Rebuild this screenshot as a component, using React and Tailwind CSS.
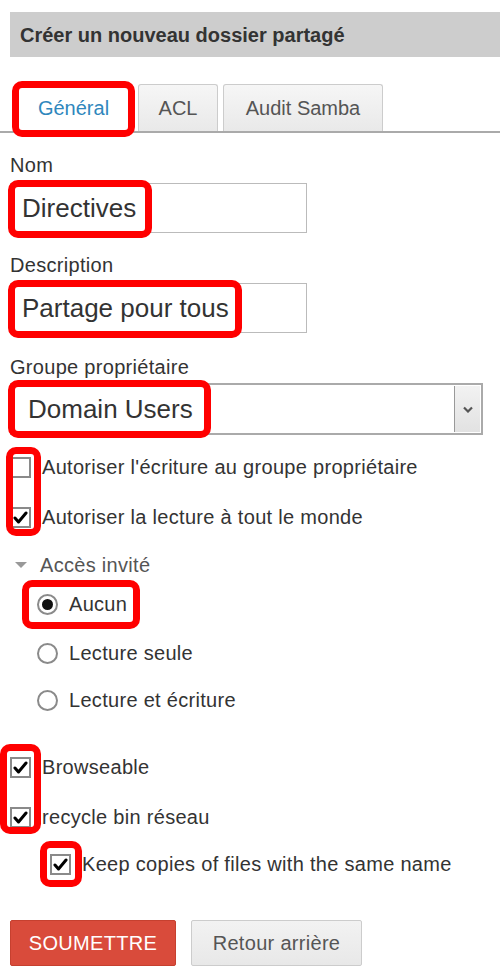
import React from 'react';

function Check({ checked }) {
	return (
		<span className="w-[21px] h-[21px] border-2 border-[#8a8a8a] bg-white flex items-center justify-center shrink-0">
			{checked && (
				<svg width="15" height="13" viewBox="0 0 15 13">
					<path d="M2 7 L5.5 11 L13 2" fill="none" stroke="#000" strokeWidth="3" strokeLinecap="round" strokeLinejoin="round" />
				</svg>
			)}
		</span>
	);
}

function Radio({ checked }) {
	return (
		<span className="w-[21px] h-[21px] rounded-full border-2 border-[#8a8a8a] bg-white flex items-center justify-center shrink-0">
			{checked && <span className="w-[11px] h-[11px] rounded-full bg-[#111]" />}
		</span>
	);
}

function Mark({ className }) {
	return <span className={`absolute border-[7px] border-[#ff0000] rounded-[10px] pointer-events-none ${className}`} />;
}

export default function App() {
	return (
		<div className="w-[500px] min-h-[980px] bg-white font-['Liberation_Sans',Arial,sans-serif] text-[20px] text-[#333] overflow-hidden">
			<div className="mt-[12px] ml-[10px] h-[45px] bg-[#cdcdcd] flex items-center pl-[10px] font-bold">
				Créer un nouveau dossier partagé
			</div>

			<div className="mt-[27px] h-[49px] flex items-end gap-[5px] pl-[14px] border-b-2 border-[#aaaaaa]">
				<div className="relative w-[119px] h-[47px] bg-white border border-[#ccc] border-b-0 rounded-t-[3px] flex items-center justify-center text-[#2f87bd]">
					Général
					<Mark className="left-[-3px] top-[-4px] w-[123px] h-[56px]" />
				</div>
				<div className="w-[80px] h-[47px] bg-gradient-to-b from-[#f6f6f6] to-[#e9e9e9] border border-[#ccc] border-b-0 rounded-t-[3px] flex items-center justify-center text-[#555]">
					ACL
				</div>
				<div className="w-[160px] h-[47px] bg-gradient-to-b from-[#f6f6f6] to-[#e9e9e9] border border-[#ccc] border-b-0 rounded-t-[3px] flex items-center justify-center text-[#555]">
					Audit Samba
				</div>
			</div>

			<div className="pl-[10px] tracking-[0.3px]">
				<div className="mt-[22px] leading-[20px]">Nom</div>
				<div className="relative mt-[8px] w-[297px] h-[50px] border border-[#bbb] flex items-center pl-[11px] text-[26px] tracking-normal">
					Directives
					<Mark className="left-[-3px] top-[-4px] w-[144px] h-[58px]" />
				</div>

				<div className="mt-[22px] leading-[20px]">Description</div>
				<div className="relative mt-[8px] w-[297px] h-[50px] border border-[#bbb] flex items-center pl-[11px] text-[26px] tracking-normal">
					Partage pour tous
					<Mark className="left-[-3px] top-[-4px] w-[234px] h-[58px]" />
				</div>

				<div className="mt-[24px] leading-[20px]">Groupe propriétaire</div>
				<div className="relative mt-[6px] w-[473px] h-[52px] border-2 border-[#aaa] flex items-stretch text-[26px] tracking-normal">
					<div className="flex-1 flex items-center pl-[16px]">Domain Users</div>
					<div className="w-[26px] my-[1px] mr-[1px] bg-gradient-to-b from-[#f2f2f2] to-[#e2e2e2] border-l border-[#999] flex items-center justify-center">
						<svg width="10" height="7" viewBox="0 0 10 7">
							<path d="M1 1.5 L5 5.5 L9 1.5" fill="none" stroke="#555" strokeWidth="2.2" />
						</svg>
					</div>
					<Mark className="left-[-4px] top-[-5px] w-[203px] h-[58px]" />
				</div>

				<div className="relative mt-[20px]">
					<div className="h-[24px] flex items-center gap-[11px]">
						<Check />
						<span>Autoriser l'écriture au groupe propriétaire</span>
					</div>
					<div className="mt-[26px] h-[24px] flex items-center gap-[11px]">
						<Check checked />
						<span>Autoriser la lecture à tout le monde</span>
					</div>
					<Mark className="left-[-4px] top-[-8px] w-[35px] h-[89px]" />
				</div>

				<div className="mt-[24px] h-[24px] flex items-center text-[#555]">
					<svg width="12" height="6" viewBox="0 0 12 6" className="ml-[5px] mr-[13px]">
						<path d="M0 0 L12 0 L6 6 Z" fill="#999" />
					</svg>
					Accès invité
				</div>

				<div className="pl-[27px]">
					<div className="relative mt-[15px] h-[24px] flex items-center gap-[11px]">
						<Radio checked />
						<span>Aucun</span>
						<Mark className="left-[-15px] top-[-12px] w-[118px] h-[49px]" />
					</div>
					<div className="mt-[25px] h-[24px] flex items-center gap-[11px]">
						<Radio />
						<span>Lecture seule</span>
					</div>
					<div className="mt-[23px] h-[24px] flex items-center gap-[11px]">
						<Radio />
						<span>Lecture et écriture</span>
					</div>
				</div>

				<div className="relative mt-[43px]">
					<div className="h-[24px] flex items-center gap-[11px]">
						<Check checked />
						<span>Browseable</span>
					</div>
					<div className="mt-[26px] h-[24px] flex items-center gap-[11px]">
						<Check checked />
						<span>recycle bin réseau</span>
					</div>
					<Mark className="left-[-10px] top-[-11px] w-[41px] h-[90px]" />
				</div>

				<div className="mt-[23px] h-[24px] flex items-center gap-[11px] pl-[40px]">
					<span className="relative">
						<Check checked />
						<Mark className="left-[-10px] top-[-13px] w-[42px] h-[46px]" />
					</span>
					<span>Keep copies of files with the same name</span>
				</div>

				<div className="mt-[44px] flex gap-[15px]">
					<button className="w-[166px] h-[46px] bg-[#d94b3b] border border-[#c6402f] rounded-[2px] text-white uppercase">
						Soumettre
					</button>
					<button className="w-[171px] h-[46px] bg-gradient-to-b from-[#f2f2f2] to-[#e8e8e8] border border-[#ccc] rounded-[2px] text-[#555]">
						Retour arrière
					</button>
				</div>
			</div>
		</div>
	);
}
